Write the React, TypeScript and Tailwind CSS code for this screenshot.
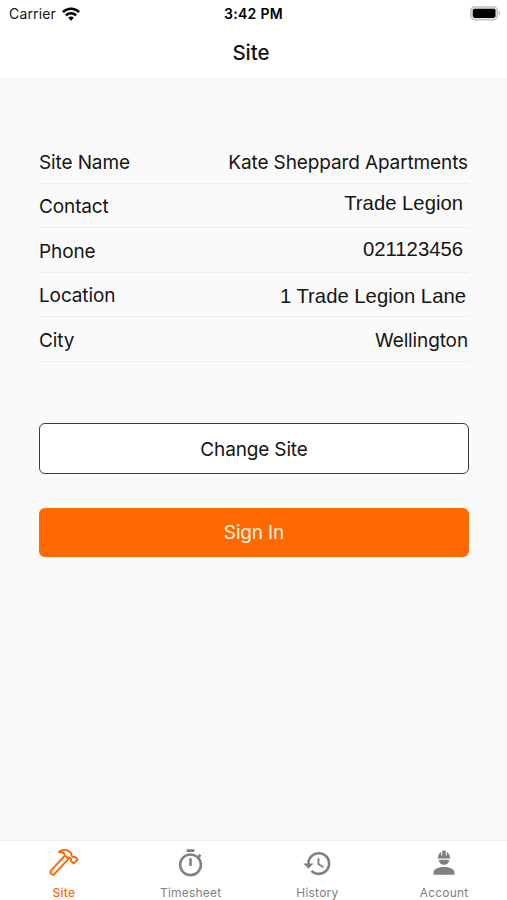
import type { ReactNode } from 'react';
import { MdHistory, MdOutlineTimer } from 'react-icons/md';

type Row = {
  label: string;
  value: string;
  valueClass: string;
};

const rows: Row[] = [
  {
    label: 'Site Name',
    value: 'Kate Sheppard Apartments',
    valueClass: "font-['Inter'] text-[19px] tracking-[-0.12px] pt-[4px]",
  },
  {
    label: 'Contact',
    value: 'Trade Legion',
    valueClass: "font-['Liberation_Sans'] text-[20.3px] pr-[5px] pb-[5px]",
  },
  {
    label: 'Phone',
    value: '021123456',
    valueClass: "font-['Liberation_Sans'] text-[20.3px] pr-[5px] pb-[2px]",
  },
  {
    label: 'Location',
    value: '1 Trade Legion Lane',
    valueClass: "font-['Liberation_Sans'] text-[20.3px] pr-[2px] pt-[3px]",
  },
  {
    label: 'City',
    value: 'Wellington',
    valueClass: "font-['Inter'] text-[19px] tracking-[-0.12px] pt-[4px]",
  },
];

function WifiIcon() {
  return (
    <svg width="18" height="14" viewBox="0 0 18 14" fill="none" stroke="#000" strokeWidth="2.5">
      <path d="M0.9 5.1C5.5 0.6 12.5 0.6 17.1 5.1" />
      <path d="M3.9 8.3C6.8 5.5 11.2 5.5 14.1 8.3" />
      <path d="M9 13.7 6.2 10.8C7.8 9.2 10.2 9.2 11.8 10.8Z" fill="#000" stroke="none" />
    </svg>
  );
}

function BatteryIcon() {
  return (
    <svg width="31" height="15" viewBox="0 0 31 15">
      <rect x="0.8" y="0.8" width="26.6" height="13" rx="4" fill="#e4e4e4" stroke="#bdbdbd" strokeWidth="1.3" />
      <rect x="2.8" y="2.7" width="22.7" height="9.2" rx="1.8" fill="#000" />
      <path d="M28.8 5C30.8 5.8 30.8 8.8 28.8 9.6Z" fill="#b5b5b5" />
    </svg>
  );
}

function HammerIcon() {
  return (
    <svg
      width="32"
      height="32"
      viewBox="0 0 32 32"
      fill="none"
      stroke="currentColor"
      strokeWidth="1.9"
      strokeLinejoin="round"
      strokeLinecap="round"
    >
      <path d="M11 6C14.2 3.2 18.8 3.1 22 6.1L23.4 7.5V9.6L25.1 11.1 26.8 10.8 29.7 13.5 25.7 17.4 23 14.8 23.2 13 21.6 11.5 19.4 11.7 16.7 9.1C16.6 7.2 14 6 11 6Z" />
      <path d="M17.1 9.5 2.9 24.7C1.2 26.6 4.3 30 6.3 28.2L20.9 12.4" />
    </svg>
  );
}

function WorkerIcon() {
  return (
    <svg width="32" height="32" viewBox="0 0 32 32" fill="currentColor">
      <path d="M10.1 11.4C10.2 8.7 11.4 6.8 13.2 6V9.6H14.2V4.8Q16 4.2 17.8 4.8V9.6H18.8V6C20.6 6.8 21.8 8.7 21.9 11.4H22.4V12.6H9.6V11.4Z" />
      <path d="M10.8 13.7H21.2C21 16.7 18.8 18.7 16 18.7S11 16.7 10.8 13.7Z" />
      <path d="M5.6 28.7V25.7C5.6 22.7 11.2 21 16 21S26.4 22.7 26.4 25.7V28.7Z" />
    </svg>
  );
}

function Tab({ label, icon, active }: { label: string; icon: ReactNode; active?: boolean }) {
  return (
    <div
      className={`flex flex-1 flex-col items-center ${active ? 'font-medium text-[#ff6900]' : 'text-[#808080]'}`}
    >
      <div className="mt-[5px] flex h-8 items-start justify-center pl-px">{icon}</div>
      <span className="mt-[7px] pl-px text-[12px] leading-4 tracking-[0.2px]">{label}</span>
    </div>
  );
}

export default function App() {
  return (
    <div className="flex h-[900px] w-[507px] flex-col bg-[#fafafa] font-['Inter',sans-serif] text-[#151515]">
      <header className="h-[79px] border-b border-[#f3f3f3] bg-white">
        {/* Status bar */}
        <div className="grid h-[27px] grid-cols-3 items-center pl-[9px] pr-[6px]">
          <div className="flex items-center gap-[6px]">
            <span className="text-[14px] tracking-[0.15px]">Carrier</span>
            <WifiIcon />
          </div>
          <span className="pr-[3px] text-center text-[14px] font-semibold tracking-[0.3px] text-black">
            3:42 PM
          </span>
          <div className="flex justify-end">
            <BatteryIcon />
          </div>
        </div>
        <h1 className="pr-[5px] pt-[11px] text-center text-[20.5px] leading-[30px] font-medium">Site</h1>
      </header>

      <main className="flex-1 pr-[38px] pl-[39px] pt-[60px]">
        <dl>
          {rows.map((row) => (
            <div
              key={row.label}
              className="flex h-[44.6px] items-center justify-between border-b border-[#eeeeee] pr-px"
            >
              <dt className="pt-[4px] text-[19px] tracking-[-0.12px]">{row.label}</dt>
              <dd className={row.valueClass}>{row.value}</dd>
            </div>
          ))}
        </dl>

        <button className="mt-[61px] block h-[51px] w-full rounded-[6px] border-[1.5px] border-[#3c3c3c] bg-white pt-[3px] text-[19px] tracking-[-0.15px]">
          Change Site
        </button>
        <button className="mt-[34px] block h-[49px] w-full rounded-[6px] bg-[#ff6900] pt-px text-[19px] tracking-[-0.15px] text-[#fff0e0]">
          Sign In
        </button>
      </main>

      <nav className="flex h-[60px] border-t border-[#eeeeee] bg-white">
        <Tab label="Site" icon={<HammerIcon />} active />
        <Tab label="Timesheet" icon={<MdOutlineTimer size={31} className="mt-[2px]" />} />
        <Tab label="History" icon={<MdHistory size={31} className="mt-[2px]" />} />
        <Tab label="Account" icon={<WorkerIcon />} />
      </nav>
    </div>
  );
}
